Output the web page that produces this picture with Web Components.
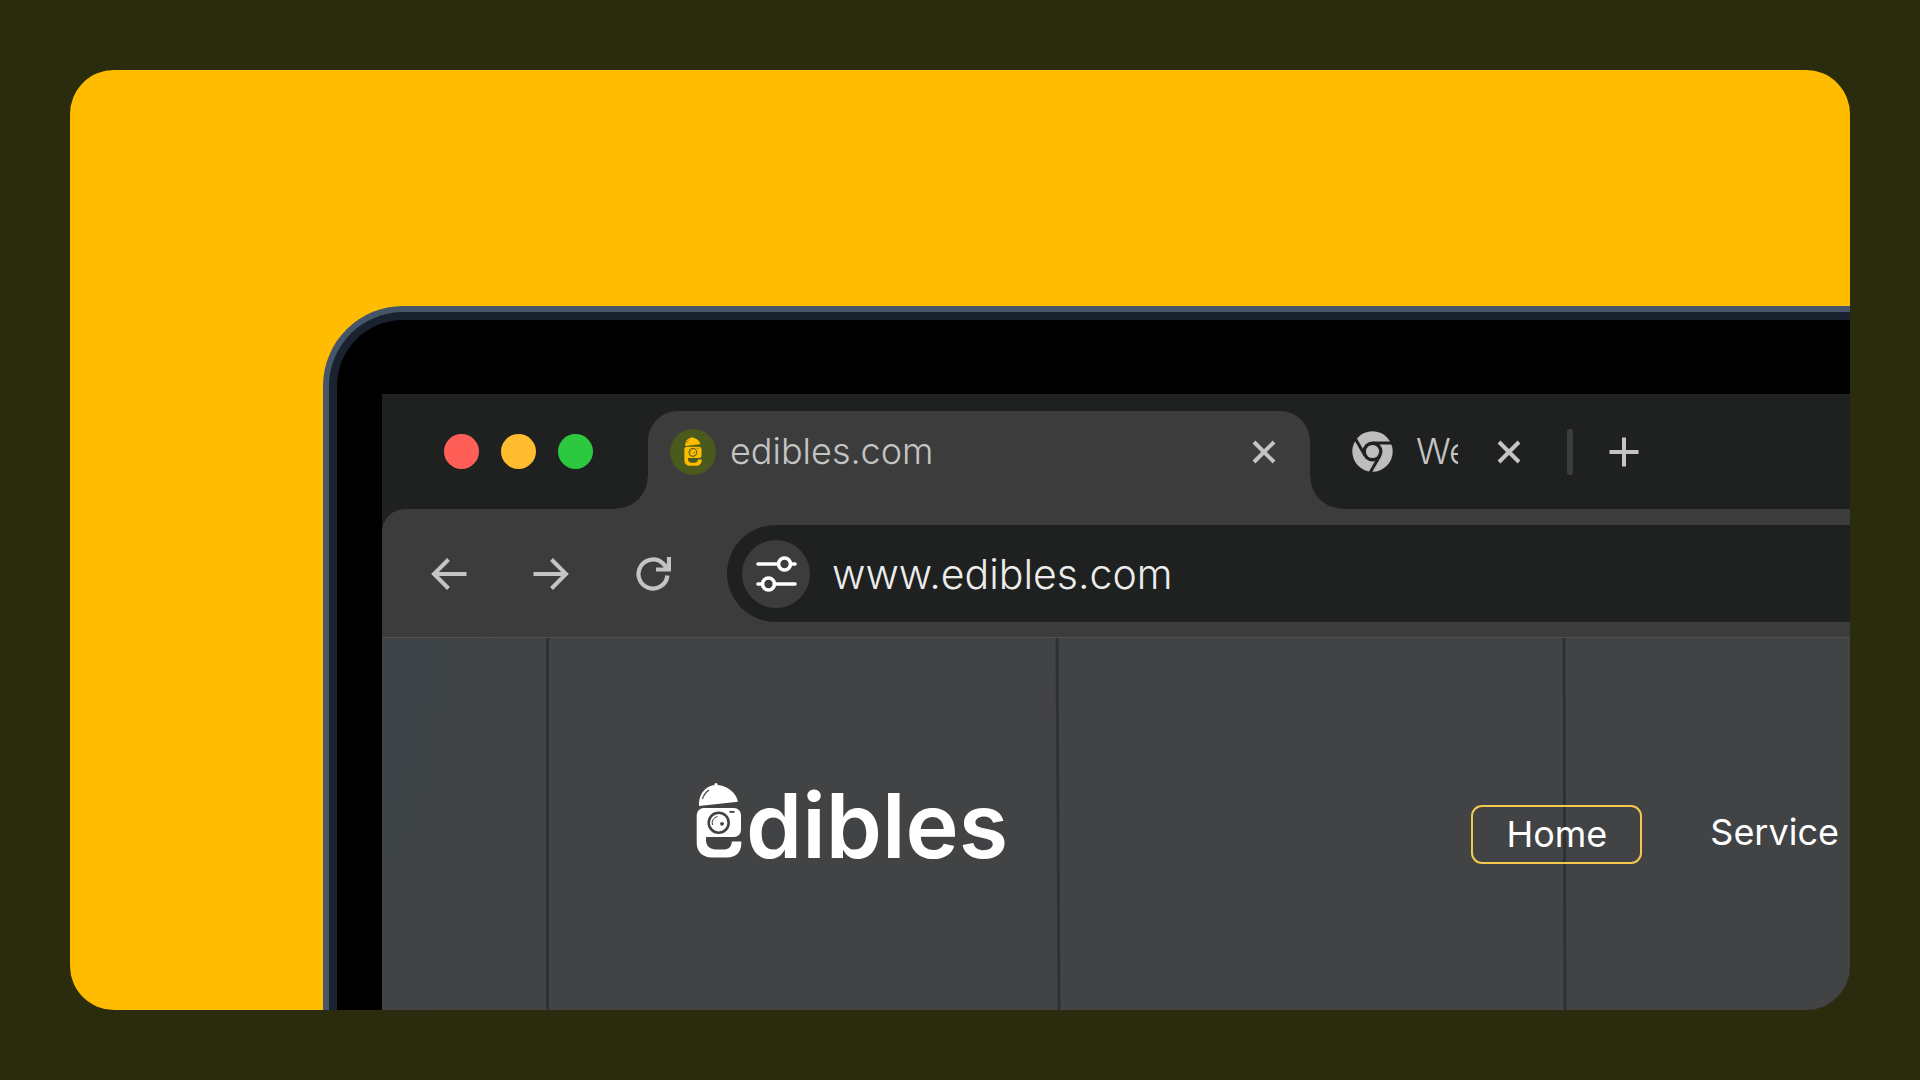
<!DOCTYPE html>
<html lang="en">
<head>
<meta charset="utf-8">
<title>edibles.com</title>
<style>
    body {
        margin: 0;
        background: #2b2b0d;
        font-family: Inter, "Liberation Sans", sans-serif;
    }
</style>
</head>
<body>
<promo-card>
    <laptop-frame>
        <tab-strip>
            <browser-tab active label="edibles.com">
                <site-badge slot="icon"></site-badge>
            </browser-tab>
            <browser-tab label="We">
                <chrome-icon slot="icon"></chrome-icon>
            </browser-tab>
        </tab-strip>
        <browser-toolbar url="www.edibles.com"></browser-toolbar>
        <site-page>
            <brand-logo slot="logo"></brand-logo>
            <nav-link slot="nav" current>Home</nav-link>
            <nav-link slot="nav">Service</nav-link>
        </site-page>
    </laptop-frame>
</promo-card>

<script>
class BaseElement extends HTMLElement {
    constructor() {
        super();
        this.attachShadow({ mode: 'open' });
    }

    connectedCallback() {
        this.shadowRoot.innerHTML = this.template();
    }
}

class PromoCard extends BaseElement {
    template() {
        return `
            <style>
                :host {
                    display: flex;
                    box-sizing: border-box;
                    height: 100vh;
                    padding: 70px;
                }
                .card {
                    flex: 1;
                    display: flex;
                    min-width: 0;
                    box-sizing: border-box;
                    padding: 236px 0 0 253px;
                    background: #ffbc00;
                    border-radius: 44px;
                    overflow: hidden;
                }
            </style>
            <div class="card"><slot></slot></div>
        `;
    }
}

class LaptopFrame extends BaseElement {
    template() {
        return `
            <style>
                :host {
                    flex: 1;
                    display: flex;
                    min-width: 0;
                    border: solid #475569;
                    border-width: 6px 0 0 6px;
                    border-top-left-radius: 80px;
                    background: #475569;
                }
                .bezel {
                    flex: 1;
                    display: flex;
                    min-width: 0;
                    border: solid #1a222f;
                    border-width: 8px 0 0 8px;
                    border-top-left-radius: 74px;
                    background: #000;
                    padding: 74px 0 0 45px;
                }
                .screen {
                    flex: 1;
                    display: flex;
                    flex-direction: column;
                    min-width: 0;
                    background: #1f2120;
                }
            </style>
            <div class="bezel"><div class="screen"><slot></slot></div></div>
        `;
    }
}

class TabStrip extends BaseElement {
    template() {
        return `
            <style>
                :host {
                    display: flex;
                    align-items: center;
                    height: 115px;
                    padding-left: 62px;
                    background: #1f2120;
                }
                .lights {
                    display: flex;
                    gap: 22px;
                    margin-right: 55px;
                }
                .light {
                    width: 35px;
                    height: 35px;
                    border-radius: 50%;
                }
                .red { background: #ff5f57; }
                .yellow { background: #febc2e; }
                .green { background: #2bc840; }
                .divider {
                    width: 6px;
                    height: 46px;
                    margin: 0 36px 0 46px;
                    border-radius: 3px;
                    background: #3c3d3d;
                }
                button {
                    display: flex;
                    padding: 0;
                    border: 0;
                    background: none;
                    color: #c4c4c4;
                }
            </style>
            <div class="lights">
                <span class="light red"></span>
                <span class="light yellow"></span>
                <span class="light green"></span>
            </div>
            <slot></slot>
            <span class="divider"></span>
            <button aria-label="New tab">
                <svg width="30" height="30" viewBox="0 0 30 30" fill="none" stroke="currentColor" stroke-width="4"><path d="M15 .5v29M.5 15h29"/></svg>
            </button>
        `;
    }
}

class BrowserTab extends BaseElement {
    template() {
        const label = this.getAttribute('label') || '';
        return `
            <style>
                :host {
                    display: flex;
                    align-items: center;
                    color: #c4c4c4;
                    padding-left: 42px;
                }
                :host([active]) {
                    position: relative;
                    align-self: flex-end;
                    box-sizing: border-box;
                    width: 662px;
                    height: 98px;
                    padding: 0 34px 17px 22px;
                    border-radius: 30px 30px 0 0;
                    background: #3c3c3c;
                }
                /* flared feet where the tab meets the toolbar */
                :host([active])::before,
                :host([active])::after {
                    content: "";
                    position: absolute;
                    bottom: 0;
                    width: 32px;
                    height: 32px;
                }
                :host([active])::before {
                    right: 100%;
                    background: radial-gradient(circle at 0 0, transparent 31px, #3c3c3c 32px);
                }
                :host([active])::after {
                    left: 100%;
                    background: radial-gradient(circle at 100% 0, transparent 31px, #3c3c3c 32px);
                }
                .label {
                    width: 42px;
                    margin: 0 39px 0 23px;
                    overflow: hidden;
                    white-space: nowrap;
                    font-size: 36px;
                    font-weight: 300;
                    line-height: 46px;
                    padding-bottom: 2px;
                }
                :host([active]) .label {
                    flex: 1;
                    margin: 0 15px 0 14px;
                }
                button {
                    display: flex;
                    padding: 0;
                    border: 0;
                    background: none;
                    color: inherit;
                }
            </style>
            <slot name="icon"></slot>
            <span class="label">${label}</span>
            <button aria-label="Close tab">
                <svg width="24" height="24" viewBox="0 0 24 24" fill="none" stroke="currentColor" stroke-width="4"><path d="M2 2l20 20M22 2 2 22"/></svg>
            </button>
        `;
    }
}

class BrandMark extends BaseElement {
    template() {
        return `
            <style>
                :host { display: inline-block; line-height: 0; }
                svg { width: var(--mark-width, 46px); height: var(--mark-height, 75px); }
                .cut { fill: var(--cutout, #424345); }
                .ring { fill: none; stroke: var(--cutout, #424345); }
            </style>
            <svg viewBox="0 0 46 75" fill="currentColor">
                <circle cx="20" cy="1.6" r="1.6"/>
                <path d="M3 23v-4C4 9 11 2 20.500 2S40 9 42 18.700z"/>
                <path d="M8 25h30a7 7 0 0 1 7 7v15a7 7 0 0 1-7 7H10v3c0 6 4 9.500 10 9.500h7c6 0 8.500-2.500 8.800-8h9.500v2c0 9-6 14-14 14H16C7 74.500.7 69 .7 60V32A7 7 0 0 1 8 25z"/>
                <circle class="ring" cx="22.700" cy="39.700" r="10" stroke-width="2.600"/>
                <path class="ring" d="M16.500 42a6.500 6.500 0 0 1 5-8.500" stroke-width="1"/>
                <circle class="cut" cx="26" cy="40.800" r="1.900"/>
                <rect class="cut" x="33.500" y="28" width="5" height="1.800"/>
                <path class="ring" d="M6.500 16c1-3.500 3.500-7 6.500-9" stroke-width="1.200"/>
            </svg>
        `;
    }
}

class SiteBadge extends BaseElement {
    template() {
        return `
            <style>
                :host {
                    display: flex;
                    align-items: center;
                    justify-content: center;
                    width: 46px;
                    height: 46px;
                    border-radius: 50%;
                    background: #4a5a1c;
                    color: #ffbc00;
                    --cutout: #4a5a1c;
                    --mark-width: 18px;
                    --mark-height: 29px;
                }
            </style>
            <brand-mark></brand-mark>
        `;
    }
}

class ChromeIcon extends BaseElement {
    template() {
        return `
            <style>
                :host { display: flex; color: #bdbdbd; }
                .gap { stroke: #1f2120; stroke-width: 3; }
            </style>
            <svg width="41" height="41" viewBox="-20.500 -20.500 41 41">
                <circle r="20.200" fill="currentColor"/>
                <circle r="10" fill="#1f2120"/>
                <path class="gap" d="M0-8.500h21"/>
                <path class="gap" d="M0-8.500h21" transform="rotate(120)"/>
                <path class="gap" d="M0-8.500h21" transform="rotate(240)"/>
                <circle r="6.600" fill="currentColor"/>
            </svg>
        `;
    }
}

class BrowserToolbar extends BaseElement {
    template() {
        const url = this.getAttribute('url') || '';
        return `
            <style>
                :host {
                    display: flex;
                    align-items: center;
                    gap: 56px;
                    padding: 16px 0 15px 49px;
                    border-bottom: 1px solid #51524f;
                    border-top-left-radius: 23px;
                    background: #3c3c3c;
                }
                .controls {
                    display: flex;
                    gap: 66px;
                }
                button {
                    display: flex;
                    align-items: center;
                    justify-content: center;
                    padding: 0;
                    border: 0;
                    background: none;
                    color: #c4c4c4;
                }
                .address {
                    flex: 1;
                    display: flex;
                    align-items: center;
                    gap: 22px;
                    height: 97px;
                    padding-left: 15px;
                    border-radius: 49px 0 0 49px;
                    background: #1f2120;
                }
                .tune {
                    width: 68px;
                    height: 68px;
                    border-radius: 50%;
                    background: #3c3c3c;
                    color: #fff;
                }
                input {
                    flex: 1;
                    min-width: 0;
                    padding: 0;
                    border: 0;
                    outline: 0;
                    background: none;
                    color: #ececec;
                    font-family: inherit;
                    font-size: 41px;
                    font-weight: 300;
                    line-height: 56px;
                }
            </style>
            <div class="controls">
                <button aria-label="Back">
                    <svg width="36" height="36" viewBox="0 0 36 36" fill="none" stroke="currentColor" stroke-width="4"><path d="M35.500 18H4M17.500 3.500 3 18l14.500 14.500"/></svg>
                </button>
                <button aria-label="Forward">
                    <svg width="36" height="36" viewBox="0 0 36 36" fill="none" stroke="currentColor" stroke-width="4"><path d="M.5 18H32M18.500 3.500 33 18 18.500 32.500"/></svg>
                </button>
                <button aria-label="Reload">
                    <svg width="36" height="36" viewBox="-18 -18 36 36" fill="none" stroke="currentColor" stroke-width="4.200"><path d="M14.400 1.500A14.500 14.500 0 1 1 10.500-10L15-5M16-17V-4.500H3"/></svg>
                </button>
            </div>
            <div class="address">
                <button class="tune" aria-label="Site settings">
                    <svg width="42" height="36" viewBox="0 0 42 36" fill="none" stroke="currentColor" stroke-width="3.600" stroke-linecap="round"><path d="M3 8h20.500M35.500 8h4.500M3 28h4.500M19.500 28h20.500"/><circle cx="29.500" cy="8" r="6"/><circle cx="13.500" cy="28" r="6"/></svg>
                </button>
                <input type="text" aria-label="Address" value="${url}">
            </div>
        `;
    }
}

class SitePage extends BaseElement {
    template() {
        return `
            <style>
                :host {
                    position: relative;
                    flex: 1;
                    display: block;
                    overflow: hidden;
                    color: #fff;
                    background: radial-gradient(130px 420px at 0 0, #3d4346 0, #3d4346 40%, #424345 100%);
                }
                .seams {
                    position: absolute;
                    inset: 0;
                    width: 100%;
                    height: 100%;
                }
                header {
                    position: relative;
                    display: flex;
                    align-items: flex-end;
                    justify-content: space-between;
                    padding: 145px 11px 0 314px;
                }
                nav {
                    display: flex;
                    align-items: flex-start;
                    gap: 68px;
                }
            </style>
            <!-- joints between the wall panels -->
            <svg class="seams" viewBox="0 0 1468 372" preserveAspectRatio="none" fill="none" stroke="#2e3133" stroke-width="3">
                <path d="M165.500 0v372M675 0l2 372M1182 0l1 372"/>
            </svg>
            <header>
                <slot name="logo"></slot>
                <nav><slot name="nav"></slot></nav>
            </header>
        `;
    }
}

class BrandLogo extends BaseElement {
    template() {
        return `
            <style>
                :host {
                    display: flex;
                    align-items: baseline;
                    gap: 4px;
                    font-size: 90px;
                    font-weight: 600;
                    line-height: 76px;
                }
            </style>
            <brand-mark></brand-mark><span>dibles</span>
        `;
    }
}

class NavLink extends BaseElement {
    template() {
        return `
            <style>
                :host { display: block; }
                a {
                    display: block;
                    color: #fff;
                    text-decoration: none;
                    font-size: 36px;
                    line-height: 55px;
                }
                :host([current]) a {
                    padding: 0 33px;
                    border: 2px solid #f2c94c;
                    border-radius: 11px;
                }
            </style>
            <a href="#"><slot></slot></a>
        `;
    }
}

customElements.define('promo-card', PromoCard);
customElements.define('laptop-frame', LaptopFrame);
customElements.define('tab-strip', TabStrip);
customElements.define('browser-tab', BrowserTab);
customElements.define('brand-mark', BrandMark);
customElements.define('site-badge', SiteBadge);
customElements.define('chrome-icon', ChromeIcon);
customElements.define('browser-toolbar', BrowserToolbar);
customElements.define('site-page', SitePage);
customElements.define('brand-logo', BrandLogo);
customElements.define('nav-link', NavLink);
</script>
</body>
</html>
